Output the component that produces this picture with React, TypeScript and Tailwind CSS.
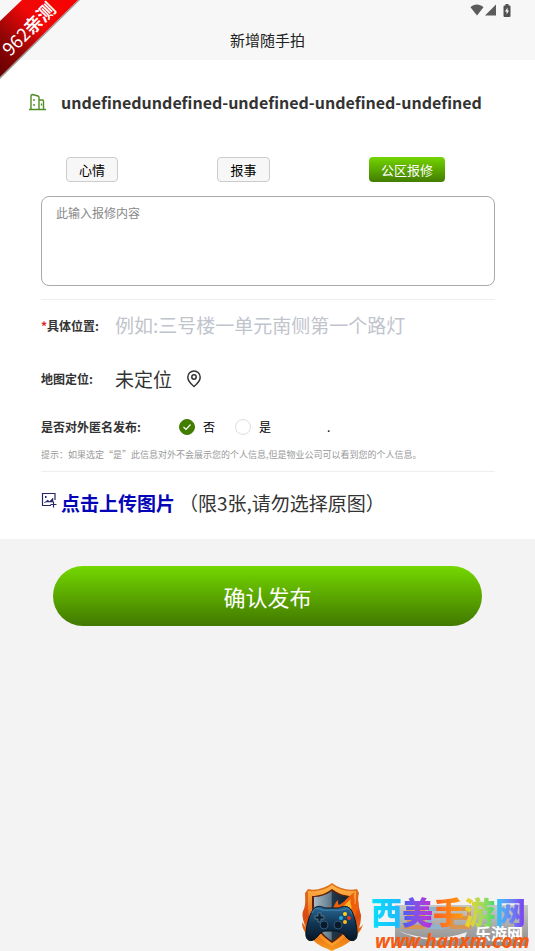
import React, { FC, useState } from "react";

const types = ["心情", "报事", "公区报修"];

const StatusBar: FC = () => (
  <div className="flex h-5 items-center justify-end gap-x-1 pr-6">
    <svg width="29" height="12" viewBox="0 0 29 12" fill="#5c5c5c" aria-hidden="true">
      <path d="M.5 3.200C4-.4 9.500-.4 13.500 3.200L7 11.500z" />
      <path d="M26 .5v11H15z" />
    </svg>
    <svg width="8" height="13" viewBox="0 0 8 13" aria-hidden="true">
      <path d="M2.500 0h3v1.500H6.500q1 0 1 1V12q0 1-1 1H1.500q-1 0-1-1V2.500q0-1 1-1h1z" fill="#505050" />
      <path d="M4.500 3.500 2 7.500h1.600v3L6 6.500H4.500z" fill="#fff" />
    </svg>
  </div>
);

const Ribbon: FC = () => (
  <div className="pointer-events-none absolute left-0 top-0 size-20">
    <svg width="80" height="80" viewBox="0 0 80 80" aria-hidden="true">
      <defs>
        <linearGradient id="ribbon" x1="0" y1="1" x2="1" y2="0">
          <stop offset="0" stopColor="#600" />
          <stop offset=".28" stopColor="#900505" />
          <stop offset=".6" stopColor="#f00808" />
          <stop offset="1" stopColor="#f80000" />
        </linearGradient>
      </defs>
      <path d="M80 0 0 79V77L78 0z" fill="#999" />
      <path d="M22 0H78L0 77V21z" fill="url(#ribbon)" />
    </svg>
    <span className="absolute -left-3 top-4 w-20 -rotate-45 text-center text-lg leading-6 whitespace-nowrap text-white">
      962<b>亲测</b>
    </span>
  </div>
);

const Shield: FC = () => (
  <svg width="62" height="68" viewBox="0 0 62 68" aria-hidden="true">
    <defs>
      <linearGradient id="rim" x1="0" y1="0" x2="0" y2="1">
        <stop offset="0" stopColor="#e07a20" />
        <stop offset=".5" stopColor="#d9480f" />
        <stop offset="1" stopColor="#f79a1e" />
      </linearGradient>
      <linearGradient id="gold" x1="0" y1="0" x2="0" y2="1">
        <stop offset="0" stopColor="#ffb648" />
        <stop offset=".6" stopColor="#e8651a" />
        <stop offset="1" stopColor="#ffa62b" />
      </linearGradient>
      <linearGradient id="steel" x1="0" y1="0" x2="1" y2="0">
        <stop offset="0" stopColor="#a9bac4" />
        <stop offset=".48" stopColor="#5d7788" />
        <stop offset=".5" stopColor="#22384a" />
        <stop offset="1" stopColor="#101e2c" />
      </linearGradient>
      <linearGradient id="pad" x1="0" y1="0" x2="0" y2="1">
        <stop offset="0" stopColor="#2a6a98" />
        <stop offset=".5" stopColor="#123553" />
        <stop offset="1" stopColor="#061523" />
      </linearGradient>
    </defs>
    <path d="M31 0c8 6 17 8 25 6l2 4c-2 7 0 15 2 22 0 6-1 10-2 13 2-1 3-2 4-4-2 9-9 13-14 18-6 5-12 6-17 9-6-3-14-5-19-11C6 52 1 48 1 39l4 6C2 38 0 30 3 26c2-6 1-11 1-16l3-4C15 8 24 5 31 0z" fill="url(#rim)" />
    <path d="M31 2c7 5 16 7 24 6 0 22 3 40-24 55C5 48 7 31 7 8c8 1 18-1 24-6z" fill="url(#gold)" />
    <path d="M31 6c7 5 13 7 20 7 0 20 2 33-20 47C10 46 11 32 11 13c7 0 13-2 20-7z" fill="#5a220d" />
    <path d="M31 8c6 4 12 6 18 6 0 19 1 32-18 44C13 46 13 33 13 14c6 0 12-2 18-6z" fill="url(#steel)" />
    <path d="M24 29c3-1 4-3 5-6 1 2 1 3 1 4 4-3 3-7 7-10 0 3 0 4 1 5 6-3 8-8 16-13-3 5 1 8-1 12 2 0 3-2 4-4 2 7-1 13-6 17z" fill="#ee5f0b" />
    <path d="M30 30c3-1 4-4 6-6 0 2 1 3 2 3 4-3 7-7 12-11-2 5 2 7 0 11l-4 5z" fill="#ffb326" />
    <path d="M41 29c2-2 5-4 7-7 0 3 1 5-2 9z" fill="#ffe27a" />
    <path d="M15 24c5-2 7 1 10 1h11c4 0 6-3 11-1 6 2 10 23 9 29-1 6-7 6-11 1-3-4-6-6-9-6H25c-4 0-6 3-9 6-4 5-10 5-11-1-1-6 4-27 10-29z" fill="url(#pad)" stroke="#07131e" />
    <path d="M11 30c2-5 4-5 7-4 4 2 8 1 13 1s9 1 13-1c4-1 5 1 7 5" fill="none" stroke="#4287b2" />
    <path d="M14 33h3v-3h3v3h3v3h-3v3h-3v-3h-3z" fill="#0b2235" stroke="#67869b" strokeWidth=".7" />
    <circle cx="44" cy="31" r="2" fill="#ffd11a" />
    <circle cx="40" cy="35" r="2" fill="#20a7df" />
    <circle cx="48" cy="35" r="2" fill="#e33a1d" />
    <circle cx="44" cy="39" r="2" fill="#ffbd18" />
    <circle cx="23" cy="42" r="4" fill="#0a1a28" stroke="#2b587b" />
    <circle cx="37" cy="42" r="4" fill="#0a1a28" stroke="#2b587b" />
  </svg>
);

const Watermark: FC = () => (
  <div className="pointer-events-none absolute bottom-0 right-1 flex items-end gap-x-2">
    <Shield />
    <div className="relative w-40">
      <svg className="absolute left-6 top-3.5" width="133" height="41" viewBox="0 0 133 41" aria-hidden="true">
        <defs>
          <linearGradient id="plate" x1="0" y1="0" x2="0" y2="1">
            <stop offset="0" stopColor="#c8c8c8" />
            <stop offset="1" stopColor="#8c8c8c" />
          </linearGradient>
        </defs>
        <path d="M0 0H133V41H0z" fill="url(#plate)" />
        <path d="M4 26c21 8 43 10 68 1l-2 5c-20 6-46 4-66-6z" fill="#eee" />
        <path d="M11 4h17v6H14v5h14v7H8M57 4h17v18H57v-9h15" fill="none" stroke="#d9944f" strokeWidth="4" />
        <path d="M50 4H35v18h15" fill="none" stroke="#8fb3cf" strokeWidth="4" />
      </svg>
      <div className="relative flex text-[31px] leading-10 font-black">
        <span className="bg-linear-to-r from-[#06e0fa] to-[#1fb6ff] bg-clip-text text-transparent">西</span>
        <span className="bg-linear-to-r from-[#3f5cf5] to-[#c026d3] bg-clip-text text-transparent">美</span>
        <span className="bg-linear-to-r from-[#ff5a1f] to-[#ff9d0a] bg-clip-text text-transparent">手</span>
        <span className="bg-linear-to-r from-[#ffcf00] to-[#2fdc6e] bg-clip-text text-transparent">游</span>
        <span className="bg-linear-to-r from-[#12c8f5] to-[#7a2cf0] bg-clip-text text-transparent">网</span>
      </div>
      <span className="absolute right-2 top-8 text-base leading-5 font-bold text-white">乐游网</span>
      <div className="relative pl-1 font-['Open_Sans',sans-serif] text-[19px] leading-5 font-bold text-[#f85a10] italic">
        www.hanxm.com
      </div>
    </div>
  </div>
);

const App: FC = () => {
  const [type, setType] = useState("公区报修");
  const [anonymous, setAnonymous] = useState("否");

  return (
    <div className="relative min-h-screen overflow-hidden bg-[#f3f3f3] font-['Noto_Sans_CJK_SC',sans-serif] text-[#333]">
      <header className="h-15 bg-[#f7f7f7]">
        <StatusBar />
        <h1 className="text-center text-[15px] leading-10 text-[#222]">新增随手拍</h1>
      </header>

      <form onSubmit={(e) => e.preventDefault()}>
        <div className="bg-white pb-1">
          <div className="flex h-21 items-center gap-x-[15px] pl-[29px]">
            <svg width="17" height="18" viewBox="0 0 17 18" fill="none" stroke="#4f8d24" strokeWidth="1.400" aria-hidden="true">
              <path d="M2 16V3q0-1.500 1.500-1.500L9 3q1 .3 1 1.500V16M10 7h3.500q1 0 1 1v8M0 16.500h17M12.500 10.500v2M5 6v2M5 11v2" />
            </svg>
            <h2 className="text-base font-bold">undefinedundefined-undefined-undefined-undefined</h2>
          </div>

          <div className="pr-10 pl-[41px]">
            <div className="flex h-13 items-start justify-between pt-[13px] pr-[50px] pl-[25px]">
              {types.map((item) => (
                <button
                  key={item}
                  type="button"
                  onClick={() => setType(item)}
                  className={
                    item === type
                      ? "h-[25px] rounded bg-linear-to-b from-[#73d500] to-[#437d00] px-3 text-[13px] leading-5 text-white"
                      : "h-[25px] rounded border border-[#ccc] bg-[#f7f7f7] px-3 text-[13px] leading-5 text-black"
                  }
                >
                  {item}
                </button>
              ))}
            </div>

            <textarea
              aria-label="报修内容"
              placeholder="此输入报修内容"
              className="block h-[90px] w-full resize-none rounded-lg border border-[#aaa] px-3.5 py-2 text-xs leading-4 placeholder:text-[#888]"
            />

            <div className="mt-[13px] flex h-13 items-center border-t border-[#eee]">
              <label htmlFor="place" className="w-[74px] text-xs font-bold">
                <span className="text-[#d22]">*</span>具体位置:
              </label>
              <input
                id="place"
                placeholder="例如:三号楼一单元南侧第一个路灯"
                className="min-w-0 flex-1 text-[19px] placeholder:text-[#c0c4cc]"
              />
            </div>

            <div className="flex h-14 items-center">
              <span className="w-[74px] text-xs font-bold">地图定位:</span>
              <button type="button" className="flex items-center gap-x-3.5 text-[19px]">
                未定位
                <svg width="16" height="18" viewBox="0 0 16 18" fill="none" stroke="#333" strokeWidth="1.500" aria-hidden="true">
                  <path d="M8 16.500C5 14 1.800 11 1.800 7.200a6.200 6.200 0 0 1 12.400 0C14.200 11 11 14 8 16.500z" />
                  <circle cx="8" cy="7" r="2.200" />
                </svg>
              </button>
            </div>

            <fieldset className="flex h-10 items-center">
              <legend className="float-left w-[138px] text-xs font-bold">是否对外匿名发布:</legend>
              {["否", "是"].map((item) => (
                <label key={item} className="flex w-14 items-center gap-x-2 text-xs text-black">
                  <span className="relative flex size-4">
                    <input
                      type="radio"
                      name="anonymous"
                      checked={anonymous === item}
                      onChange={() => setAnonymous(item)}
                      className="size-4 appearance-none rounded-full border border-[#ddd] checked:border-[#437d00] checked:bg-[#437d00]"
                    />
                    {anonymous === item && (
                      <svg className="pointer-events-none absolute inset-0" width="16" height="16" fill="none" stroke="#fff" strokeWidth="1.200" aria-hidden="true">
                        <path d="m4.500 8 2.500 2.500 4.500-5" />
                      </svg>
                    )}
                  </span>
                  {item}
                </label>
              ))}
              <span className="pl-9 text-xs text-black">.</span>
            </fieldset>

            <p className="pb-2 text-[9px] leading-4 text-[#999]">
              提示：如果选定“是”此信息对外不会展示您的个人信息,但是物业公司可以看到您的个人信息。
            </p>

            <div className="flex h-16 items-center border-t border-[#eee] text-[19px]">
              <svg className="mr-1 mb-2" width="16" height="16" viewBox="0 0 16 16" fill="none" stroke="#26266b" strokeWidth="1.200" aria-hidden="true">
                <path d="M14 8V1.500H1.500v12H10M12.500 9.500v6M9.500 12.500h6" />
                <path d="M3.500 11l3-3 2 1.500L12 6v4H4z" fill="#26266b" strokeWidth=".5" />
                <path d="M4 5h1.500" strokeWidth="2" />
              </svg>
              <button type="button" className="mr-1 font-bold text-[#0505b8]">点击上传图片</button>
              <span>（限3张,请勿选择原图）</span>
            </div>
          </div>
        </div>

        <div className="px-[53px] pt-[27px]">
          <button type="submit" className="h-15 w-full rounded-full bg-linear-to-b from-[#75d800] to-[#417900] text-[22px] text-white">
            确认发布
          </button>
        </div>
      </form>

      <Ribbon />
      <Watermark />
    </div>
  );
};

export default App;
